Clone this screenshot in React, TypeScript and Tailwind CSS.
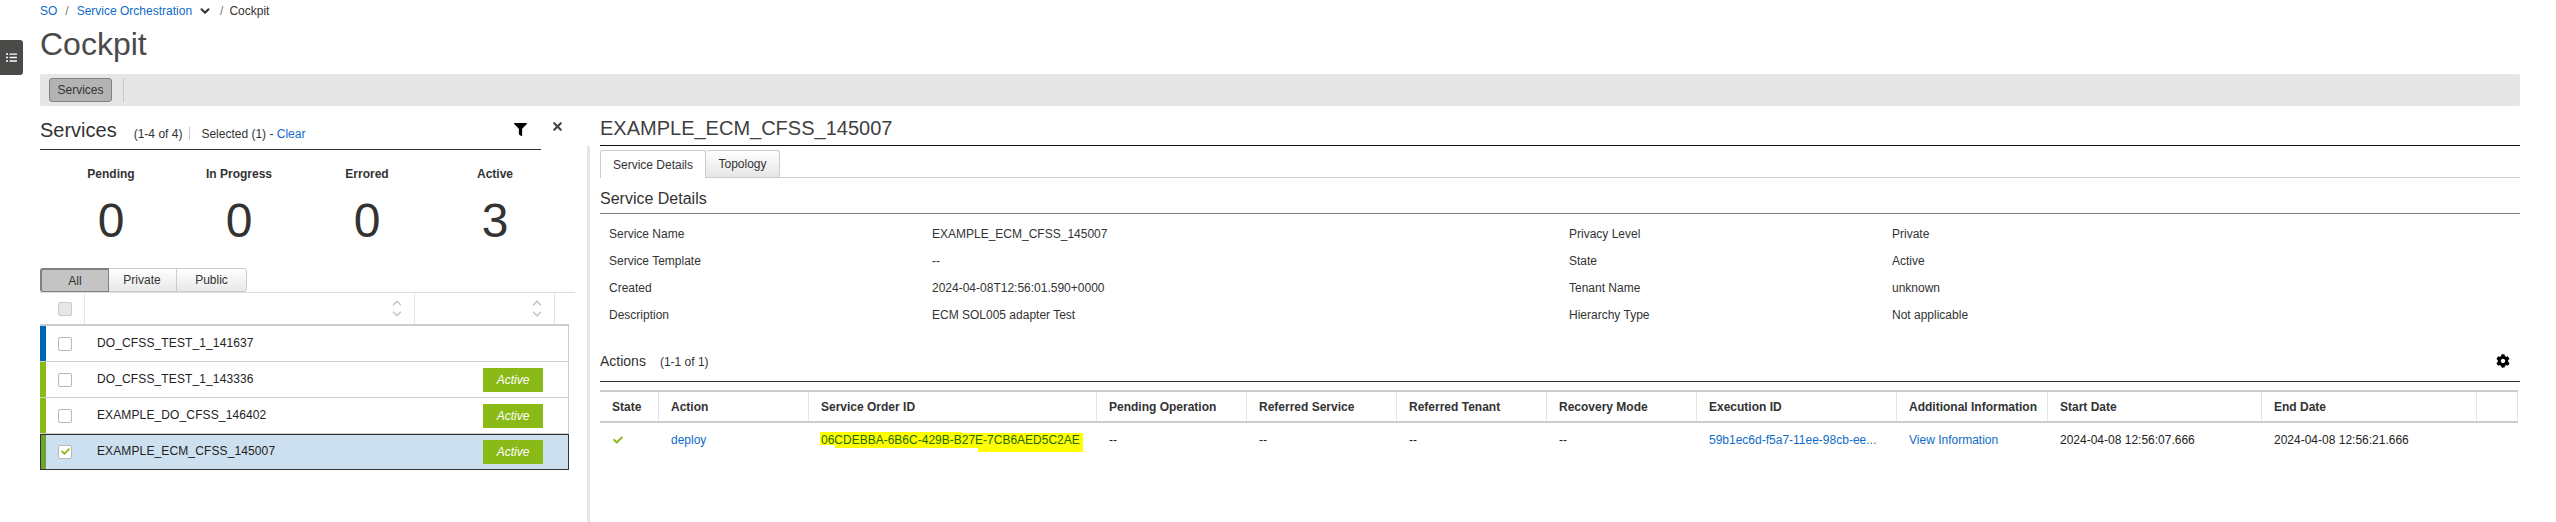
import React from 'react';
import { FaCog, FaFilter, FaCheck, FaListUl } from 'react-icons/fa';
import { ChevronDown, ChevronUp, X } from 'lucide-react';

const services = [
    { name: 'DO_CFSS_TEST_1_141637', bar: 'bg-[#0066b3]', active: false, selected: false },
    { name: 'DO_CFSS_TEST_1_143336', bar: 'bg-[#89ba17]', active: true, selected: false },
    { name: 'EXAMPLE_DO_CFSS_146402', bar: 'bg-[#89ba17]', active: true, selected: false },
    { name: 'EXAMPLE_ECM_CFSS_145007', bar: 'bg-[#6ea52e]', active: true, selected: true },
];

const summary = [
    { label: 'Pending', value: '0' },
    { label: 'In Progress', value: '0' },
    { label: 'Errored', value: '0' },
    { label: 'Active', value: '3' },
];

const details = [
    ['Service Name', 'EXAMPLE_ECM_CFSS_145007', 'Privacy Level', 'Private'],
    ['Service Template', '--', 'State', 'Active'],
    ['Created', '2024-04-08T12:56:01.590+0000', 'Tenant Name', 'unknown'],
    ['Description', 'ECM SOL005 adapter Test', 'Hierarchy Type', 'Not applicable'],
];

const columns = [
    { title: 'State', width: 'w-[59px]' },
    { title: 'Action', width: 'w-[150px]' },
    { title: 'Service Order ID', width: 'w-[288px]' },
    { title: 'Pending Operation', width: 'w-[150px]' },
    { title: 'Referred Service', width: 'w-[150px]' },
    { title: 'Referred Tenant', width: 'w-[150px]' },
    { title: 'Recovery Mode', width: 'w-[150px]' },
    { title: 'Execution ID', width: 'w-[200px]' },
    { title: 'Additional Information', width: 'w-[151px]' },
    { title: 'Start Date', width: 'w-[214px]' },
    { title: 'End Date', width: 'w-[215px]' },
    { title: '', width: 'flex-1' },
];

const Checkbox = ({ checked }: { checked?: boolean }) => (
    <div className="w-[14px] h-[14px] bg-white border border-[#b8b8b8] rounded-[2px] flex items-center justify-center shrink-0">
        {checked && <FaCheck className="w-[9px] h-[9px] text-[#89ba17]" />}
    </div>
);

const SortIcon = () => (
    <div className="flex flex-col items-center text-[#c8c8c8]">
        <ChevronUp className="w-[14px] h-[14px]" strokeWidth={3} />
        <ChevronDown className="w-[14px] h-[14px] -mt-[3px]" strokeWidth={3} />
    </div>
);

const Cell = ({ width, children }: { width: string; children?: React.ReactNode }) => (
    <div className={`${width} pl-[12px] shrink-0`}>{children}</div>
);

export default function App() {
    return (
        <div className="relative w-[2556px] h-[522px] bg-white overflow-hidden font-['Liberation_Sans',Arial,sans-serif] text-[12px] text-[#333]">
            {/* Slide-out handle */}
            <div className="absolute left-0 top-[40px] w-[23px] h-[35px] bg-[#4a4a48] rounded-r-[3px] flex items-center justify-center text-white">
                <FaListUl className="w-[11px] h-[11px]" />
            </div>

            <div className="ml-[40px] mr-[36px]">
                {/* Breadcrumb */}
                <div className="h-[22px] flex items-center gap-[8px]">
                    <a className="text-[#0f6cc8]">SO</a>
                    <span className="text-[#777]">/</span>
                    <a className="text-[#0f6cc8]">Service Orchestration</a>
                    <ChevronDown className="w-[14px] h-[14px] text-[#333] -ml-[2px]" strokeWidth={3.5} />
                    <span className="text-[#777]">/</span>
                    <span className="-ml-[2px]">Cockpit</span>
                </div>

                <h1 className="text-[32px] leading-[37px] mt-[4px] text-[#4a4a4a]">Cockpit</h1>

                {/* Toolbar */}
                <div className="h-[32px] mt-[11px] bg-[#e6e6e6] rounded-[2px] flex items-center pl-[9px]">
                    <div className="w-[63px] h-[24px] bg-[#b3b3b3] border border-[#808080] rounded-[3px] flex items-center justify-center">
                        Services
                    </div>
                    <div className="w-px h-[24px] bg-[#c8c8c8] ml-[11px]" />
                </div>

                <div className="flex">
                    {/* Services list */}
                    <section className="w-[547px] shrink-0">
                        <div className="w-[501px] h-[44px] border-b border-[#333] flex items-center relative">
                            <h2 className="text-[20px] leading-[24px] mt-[4px]">Services</h2>
                            <span className="ml-[17px] mt-[12px]">(1-4 of 4)</span>
                            <span className="w-px h-[13px] bg-[#ccc] mx-[7px] mt-[12px]" />
                            <span className="ml-[4px] mt-[12px]">Selected (1) - <a className="text-[#0f6cc8]">Clear</a></span>
                            <FaFilter className="absolute left-[474px] top-[17px] w-[13px] h-[13px] text-black" />
                            <X className="absolute left-[511px] top-[14px] w-[13px] h-[13px] text-[#444]" strokeWidth={4} />
                        </div>

                        <div className="w-[512px] ml-[7px] grid grid-cols-4 mt-[15px]">
                            {summary.map((item) => (
                                <div key={item.label} className="flex flex-col items-center">
                                    <div className="font-bold leading-[18px]">{item.label}</div>
                                    <div className="text-[48px] leading-[56px] mt-[10px]">{item.value}</div>
                                </div>
                            ))}
                        </div>

                        {/* Filter buttons */}
                        <div className="flex w-[207px] h-[24px] mt-[19px] border border-[#ccc] rounded-[3px] bg-gradient-to-b from-white to-[#e8e8e8]">
                            <div className="w-[69px] bg-[#c4c4c4] border border-[#808080] border-t-2 border-l-2 -m-px rounded-l-[3px] flex items-center justify-center">All</div>
                            <div className="w-[69px] border-r border-[#ccc] flex items-center justify-center">Private</div>
                            <div className="flex-1 flex items-center justify-center">Public</div>
                        </div>

                        {/* List header */}
                        <div className="w-[535px] h-[32px] border-t border-[#ddd] flex items-center">
                            <div className="w-[45px] h-full border-r border-[#e4e4e4] flex items-center pl-[18px]">
                                <div className="w-[14px] h-[14px] bg-[#e6e6e6] border border-[#ccc] rounded-[2px]" />
                            </div>
                            <div className="w-[330px] h-full border-r border-[#e4e4e4] flex items-center justify-end pr-[10px]">
                                <SortIcon />
                            </div>
                            <div className="w-[140px] h-full border-r border-[#e4e4e4] flex items-center justify-end pr-[10px]">
                                <SortIcon />
                            </div>
                        </div>

                        {/* Rows */}
                        <div className="w-[529px] border-t-2 border-[#ccc]">
                            {services.map((service) => (
                                <div
                                    key={service.name}
                                    className={`h-[36px] flex items-center border-r border-b ${service.selected ? 'bg-[#cce0ef] border-[#333] outline outline-[#333] -outline-offset-1' : 'border-[#ccc]'}`}
                                >
                                    <div className={`w-[6px] h-full shrink-0 ${service.bar}`} />
                                    <div className="ml-[12px]">
                                        <Checkbox checked={service.selected} />
                                    </div>
                                    <div className="ml-[25px] flex-1 text-[#222] tracking-[0.12px] -mt-[2px]">{service.name}</div>
                                    {service.active && (
                                        <div className="w-[60px] h-[24px] mr-[25px] bg-[#89ba17] text-white italic flex items-center justify-center">Active</div>
                                    )}
                                </div>
                            ))}
                        </div>
                    </section>

                    {/* Details */}
                    <section className="flex-1 min-w-0 relative pl-[13px]">
                        <div className="absolute left-0 top-[40px] w-[3px] h-[376px] bg-[#e6e6e6]" />
                        <div className="h-[40px] pt-[4px] border-b border-[#111] flex items-center text-[20px] text-[#3f3f3f]">EXAMPLE_ECM_CFSS_145007</div>

                        <div className="flex h-[32px] items-end border-b border-[#ccc]">
                            <div className="w-[106px] h-[28px] bg-white border border-b-0 border-[#ccc] rounded-t-[3px] flex items-center justify-center -mb-px">Service Details</div>
                            <div className="w-[74px] h-[27px] bg-gradient-to-b from-white to-[#e6e6e6] border border-l-0 border-b-0 border-[#ccc] rounded-t-[3px] flex items-center justify-center">Topology</div>
                        </div>

                        <h3 className="h-[36px] pt-[6px] border-b border-[#808080] flex items-center text-[16px]">Service Details</h3>

                        <div className="pt-[6px]">
                            {details.map((row) => (
                                <div key={row[0]} className="flex h-[27px] items-center pl-[9px]">
                                    <div className="w-[323px]">{row[0]}</div>
                                    <div className="w-[637px]">{row[1]}</div>
                                    <div className="w-[323px]">{row[2]}</div>
                                    <div>{row[3]}</div>
                                </div>
                            ))}
                        </div>

                        {/* Actions */}
                        <div className="h-[54px] pt-[13px] border-b border-[#333] flex items-center justify-between">
                            <div className="flex items-baseline gap-[14px]">
                                <span className="text-[14px]">Actions</span>
                                <span>(1-1 of 1)</span>
                            </div>
                            <FaCog className="w-[14px] h-[14px] text-black mr-[10px]" />
                        </div>

                        <div className="mt-[8px] mr-[2px]">
                            <div className="flex h-[33px] items-center border-y-2 border-[#ccc] font-bold text-[#333]">
                                {columns.map((col, i) => (
                                    <div key={i} className={`${col.width} h-full pl-[12px] flex items-center border-r border-[#e4e4e4] shrink-0 truncate last:shrink`}>{col.title}</div>
                                ))}
                            </div>
                            <div className="flex h-[33px] items-center text-[#222]">
                                <Cell width="w-[59px]"><FaCheck className="w-[12px] h-[10px] text-[#89ba17]" /></Cell>
                                <Cell width="w-[150px]"><a className="text-[#0f6cc8]">deploy</a></Cell>
                                <Cell width="w-[288px]">
                                    <div className="relative">
                                        <svg className="absolute -left-[2px] top-0 w-[265px] h-[21px]" viewBox="0 0 265 21">
                                            <path d="M1 1 H143 V2 H264 V21 H159 V17 H16 V14 H1 Z" fill="#ffff00" />
                                        </svg>
                                        <span className="relative text-[#1c6a00]">06CDEBBA-6B6C-429B-B27E-7CB6AED5C2AE</span>
                                    </div>
                                </Cell>
                                <Cell width="w-[150px]">--</Cell>
                                <Cell width="w-[150px]">--</Cell>
                                <Cell width="w-[150px]">--</Cell>
                                <Cell width="w-[150px]">--</Cell>
                                <Cell width="w-[200px]"><a className="text-[#0f6cc8]">59b1ec6d-f5a7-11ee-98cb-ee...</a></Cell>
                                <Cell width="w-[151px]"><a className="text-[#0f6cc8]">View Information</a></Cell>
                                <Cell width="w-[214px]">2024-04-08 12:56:07.666</Cell>
                                <Cell width="w-[215px]">2024-04-08 12:56:21.666</Cell>
                            </div>
                        </div>
                    </section>
                </div>
            </div>
        </div>
    );
}
